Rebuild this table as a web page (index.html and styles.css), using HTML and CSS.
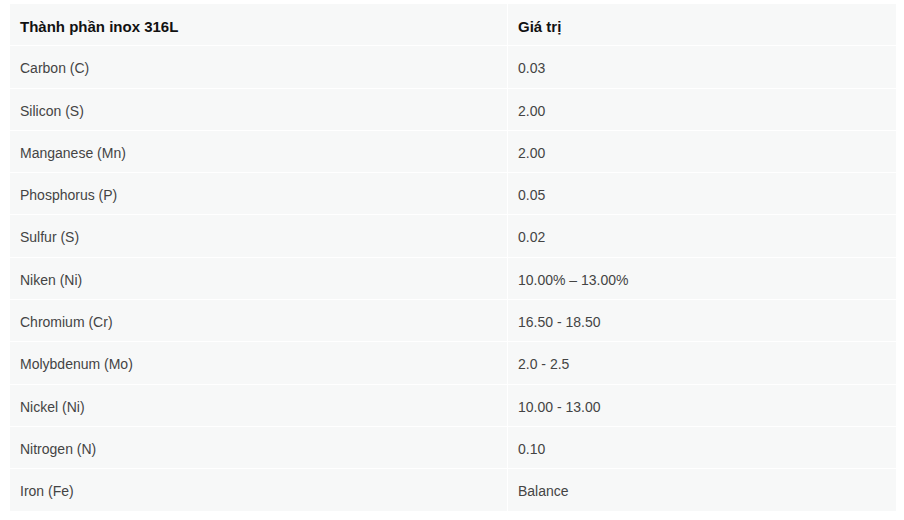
FILE: index.html
```html
<!DOCTYPE html>
<html lang="vi">
<head>
<meta charset="utf-8">
<title>Thành phần inox 316L</title>
<link rel="stylesheet" href="styles.css">
</head>
<body>
<table class="spec">
  <thead>
    <tr><th class="c1">Thành phần inox 316L</th><th class="c2">Giá trị</th></tr>
  </thead>
  <tbody>
    <tr><td>Carbon (C)</td><td>0.03</td></tr>
    <tr><td>Silicon (S)</td><td>2.00</td></tr>
    <tr><td>Manganese (Mn)</td><td>2.00</td></tr>
    <tr><td>Phosphorus (P)</td><td>0.05</td></tr>
    <tr><td>Sulfur (S)</td><td>0.02</td></tr>
    <tr><td>Niken (Ni)</td><td>10.00% – 13.00%</td></tr>
    <tr><td>Chromium (Cr)</td><td>16.50 - 18.50</td></tr>
    <tr><td>Molybdenum (Mo)</td><td>2.0 - 2.5</td></tr>
    <tr><td>Nickel (Ni)</td><td>10.00 - 13.00</td></tr>
    <tr><td>Nitrogen (N)</td><td>0.10</td></tr>
    <tr><td>Iron (Fe)</td><td>Balance</td></tr>
  </tbody>
</table>
</body>
</html>
```
FILE: styles.css
```css
html, body {
  margin: 0;
  background: #ffffff;
}
body {
  padding: 4px 8px 0 10px;
  font-family: "Liberation Sans", Arial, sans-serif;
  font-size: 14px;
  color: #444444;
}
.spec {
  width: 886px;
  border-collapse: collapse;
  background: #f7f8f8;
  table-layout: fixed;
}
.spec .c1 { width: 477px; }
.spec th,
.spec td {
  border: 1px solid #ffffff;
  padding: 12px 10px 8px;
  line-height: 21.3px;
  text-align: left;
  vertical-align: middle;
}
.spec tr:first-child th { border-top: none; }
.spec th:first-child, .spec td:first-child { border-left: none; }
.spec th:last-child, .spec td:last-child { border-right: none; }
.spec tbody tr:last-child td { border-bottom: none; }
.spec th {
  font-size: 15px;
  font-weight: bold;
  color: #111111;
}
```
